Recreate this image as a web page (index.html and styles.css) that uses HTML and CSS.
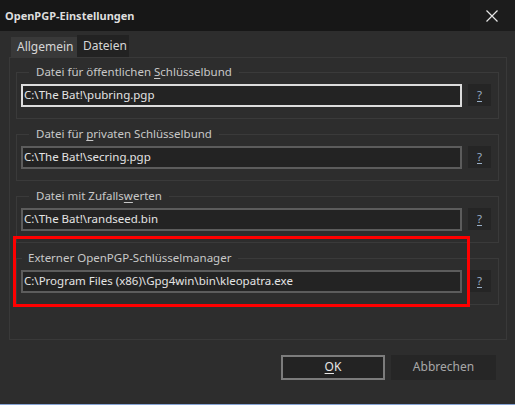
FILE: index.html
```html
<!DOCTYPE html>
<html>
<head>
<meta charset="utf-8">
<link rel="stylesheet" href="styles.css">
</head>
<body>
<div class="window">
  <div class="titlebar">
    <span class="title">OpenPGP-Einstellungen</span>
    <span class="close"><svg width="12" height="12" viewBox="0 0 12 12"><path d="M0.5 0.5L11.5 11.5M11.5 0.5L0.5 11.5" stroke="#e6e6e6" stroke-width="1.2" fill="none"/></svg></span>
  </div>
  <div class="body">
    <div class="tabs">
      <span class="tab">Allgemein</span>
      <span class="tab active">Dateien</span>
    </div>
    <div class="panel">
      <div class="group">
        <span class="legend">Datei für öffentlichen <u>S</u>chlüsselbund</span>
        <div class="row">
          <div class="input focus">C:\The Bat!\pubring.pgp</div>
          <span class="help">?</span>
        </div>
      </div>
      <div class="group">
        <span class="legend">Datei für <u>p</u>rivaten Schlüsselbund</span>
        <div class="row">
          <div class="input">C:\The Bat!\secring.pgp</div>
          <span class="help">?</span>
        </div>
      </div>
      <div class="group">
        <span class="legend">Datei mit Zufalls<u>w</u>erten</span>
        <div class="row">
          <div class="input">C:\The Bat!\randseed.bin</div>
          <span class="help">?</span>
        </div>
      </div>
      <div class="group">
        <span class="legend legend-ext">Externer OpenPGP-Schlüsselmanager</span>
        <div class="row">
          <div class="input">C:\Program Files (x86)\Gpg4win\bin\kleopatra.exe</div>
          <span class="help">?</span>
        </div>
      </div>
      <div class="highlight"></div>
    </div>
    <div class="buttons">
      <span class="btn ok"><u>O</u>K</span>
      <span class="btn">Abbrechen</span>
    </div>
  </div>
</div>
</body>
</html>
```
FILE: styles.css
```css
* { box-sizing: border-box; }
html, body { margin: 0; padding: 0; }
body {
  width: 515px;
  height: 405px;
  overflow: hidden;
  background: #2d2d2d;
  font-family: "Noto Sans", "Open Sans", sans-serif;
  font-size: 11.5px;
  color: #d0d0d0;
}
.window {
  height: 405px;
  display: flex;
  flex-direction: column;
  border-bottom: 1px solid #86a3d4;
}
.titlebar {
  height: 31px;
  background: #171717;
  display: flex;
  align-items: center;
  justify-content: space-between;
}
.title {
  padding-left: 5px;
  font-weight: bold;
  color: #dedede;
  font-size: 11px;
}
.close {
  width: 45px;
  height: 31px;
  background: #1c1c1c;
  display: flex;
  align-items: center;
  justify-content: center;
  padding-right: 1px;
}
.body {
  flex: 1;
  position: relative;
  padding: 4px 8px 0 9px;
}
.tabs {
  display: flex;
  align-items: flex-end;
  height: 22px;
  padding-left: 2px;
}
.tab {
  height: 20px;
  line-height: 19px;
  padding: 0 6px;
  background: #393939;
  color: #d6d6d6;
  width: 66px;
  font-size: 12px;
}
.tab.active {
  height: 22px;
  line-height: 21px;
  background: #222222;
  width: 52px;
}
.panel {
  position: relative;
  height: 283px;
  border: 1px solid #393939;
  padding: 14px 7px 0 6px;
  display: flex;
  flex-direction: column;
  gap: 15px;
}
.group {
  position: relative;
  height: 47px;
  border: 1px solid #3a3a3a;
  padding: 11px 0 0 4px;
}
.legend {
  position: absolute;
  top: -9px;
  left: 12px;
  padding: 0 7px;
  background: #2d2d2d;
  color: #c8c8c8;
  line-height: 16px;
  font-size: 11.5px;
}
.legend-ext { left: 5px; padding-left: 6px; }
u {
  text-decoration-thickness: 1px;
  text-underline-offset: 2px;
  text-decoration-skip-ink: none;
}
.row {
  display: flex;
  gap: 6px;
}
.input {
  width: 441px;
  height: 23px;
  border: 2px solid #5c5c5c;
  background: #232323;
  color: #e4e4e4;
  padding-left: 1px;
  line-height: 18px;
  white-space: nowrap;
}
.input.focus { border-color: #dcdcdc; }
.help {
  width: 23px;
  height: 22px;
  background: #252525;
  color: #9ab0c8;
  text-decoration: underline;
  text-underline-offset: 2px;
  text-decoration-skip-ink: none;
  text-align: center;
  line-height: 21px;
}
.highlight {
  position: absolute;
  left: 3px;
  top: 178px;
  width: 457px;
  height: 71px;
  border: 3px solid #ff0000;
}
.buttons {
  display: flex;
  justify-content: flex-end;
  gap: 6px;
  padding: 15px 11px 0 0;
}
.btn {
  width: 105px;
  height: 25px;
  background: #262626;
  color: #a8a8a8;
  text-align: center;
  line-height: 24px;
  font-size: 12px;
}
.btn.ok {
  width: 104px;
  border: 2px solid #7c7c7c;
  background: #232323;
  color: #e6e6e6;
  line-height: 20px;
}
```
